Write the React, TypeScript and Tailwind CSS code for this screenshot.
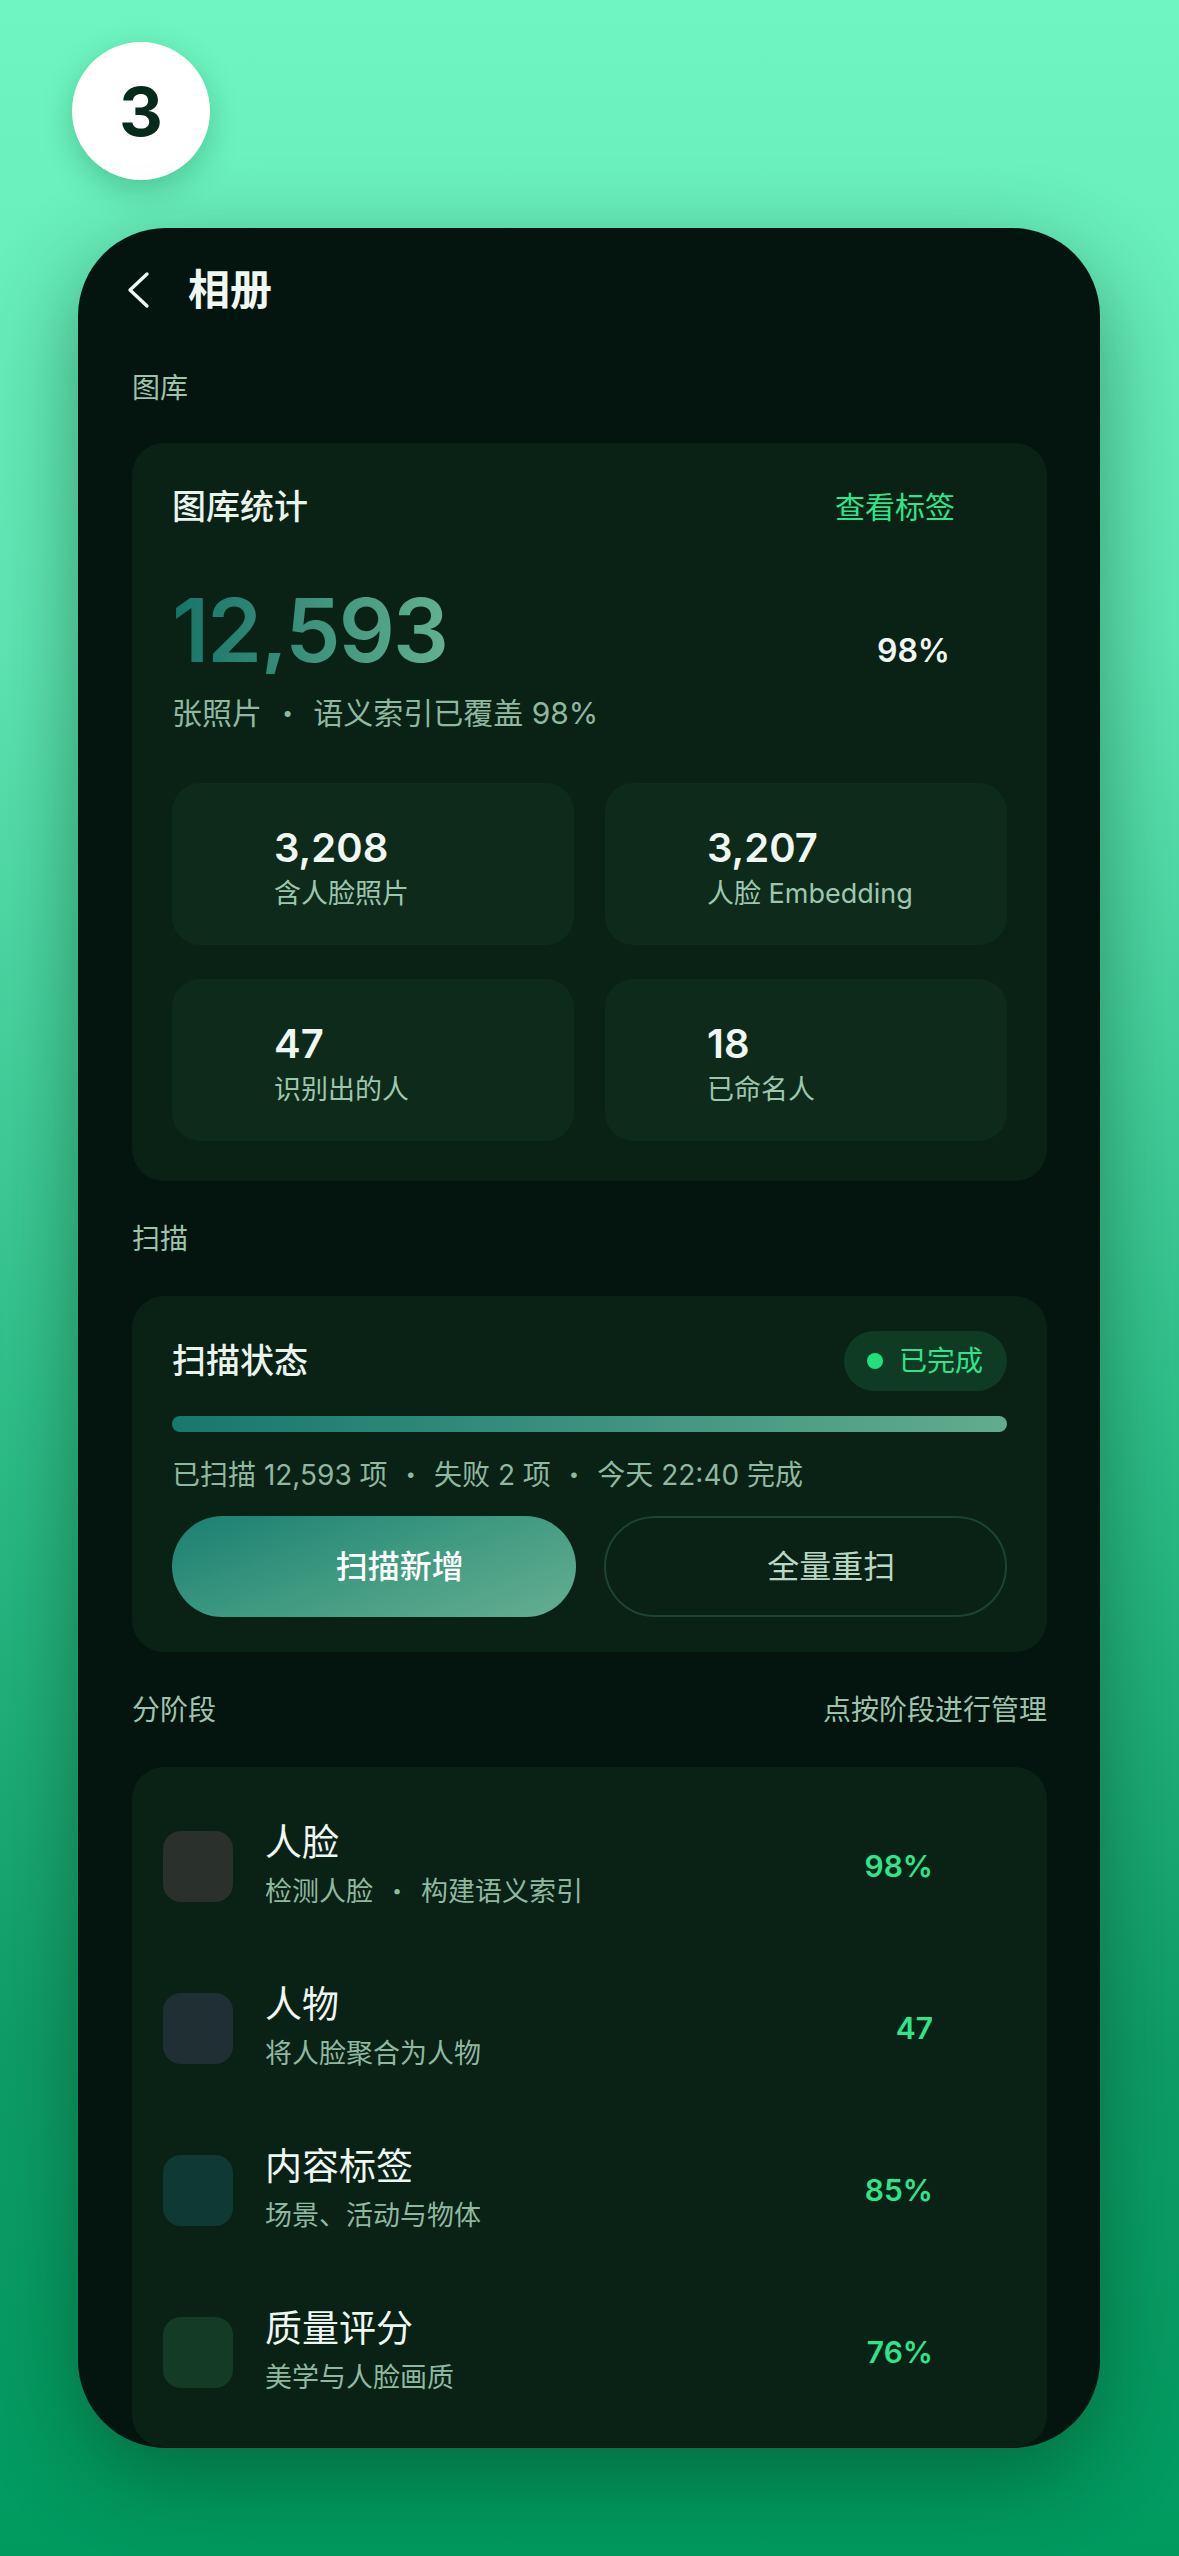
const font = { fontFamily: 'Inter, "Noto Sans CJK SC", sans-serif' };

interface Stat {
  value: string;
  label: string;
}

interface Stage {
  title: string;
  desc: string[];
  value: string;
  swatch: string;
}

const stats: Stat[] = [
  { value: '3,208', label: '含人脸照片' },
  { value: '3,207', label: '人脸 Embedding' },
  { value: '47', label: '识别出的人' },
  { value: '18', label: '已命名人' },
];

const stages: Stage[] = [
  { title: '人脸', desc: ['检测人脸', '构建语义索引'], value: '98%', swatch: 'bg-[#2a302b]' },
  { title: '人物', desc: ['将人脸聚合为人物'], value: '47', swatch: 'bg-[#1f2f33]' },
  { title: '内容标签', desc: ['场景、活动与物体'], value: '85%', swatch: 'bg-[#0f3a33]' },
  { title: '质量评分', desc: ['美学与人脸画质'], value: '76%', swatch: 'bg-[#143b25]' },
];

function Dotted({ parts, gap }: { parts: string[]; gap: string }) {
  return (
    <>
      {parts.map((p, i) => (
        <span key={p}>
          {i > 0 && <span className={`font-black ${gap}`}>·</span>}
          {p}
        </span>
      ))}
    </>
  );
}

function SectionLabel({ children, right }: { children: string; right?: string }) {
  return (
    <div className="flex items-center justify-between text-[28px] leading-[36px] text-[#9cc4ad]">
      <span>{children}</span>
      {right && <span>{right}</span>}
    </div>
  );
}

export default function App() {
  return (
    <div
      className="w-[1179px] h-[2556px] overflow-hidden bg-[linear-gradient(180deg,#6ef5c1_0%,#5fe6b4_25%,#2fbf8a_55%,#0f9e68_80%,#009a5f_100%)]"
      style={font}
    >
      <div className="pt-[42px] pl-[72px]">
        <div className="w-[138px] h-[138px] rounded-full bg-white flex items-center justify-center shadow-[0_10px_30px_rgba(0,80,40,0.25)]">
          <span className="text-[68px] font-bold text-[#082a1a] leading-none">3</span>
        </div>
      </div>

      <div className="mt-[48px] ml-[78px] w-[1022px] h-[2220px] rounded-[88px] bg-[#04140e] overflow-hidden shadow-[0_30px_90px_rgba(0,50,25,0.45)]">
        <div className="pt-[38px] pl-[48px] flex items-center h-[86px]">
          <svg width="24" height="38" viewBox="0 0 24 38" fill="none" className="text-[#eef7f1]">
            <polyline points="21,3 4,19 21,35" stroke="currentColor" strokeWidth="3.4" strokeLinecap="round" strokeLinejoin="round" />
          </svg>
          <span className="ml-[38px] text-[42px] leading-[48px] font-semibold text-[#eef7f1]">相册</span>
        </div>

        <div className="pl-[54px] pr-[53px]">
          <div className="mt-[56px]">
            <SectionLabel>图库</SectionLabel>
          </div>

          <div className="mt-[37px] rounded-[32px] bg-[#0a2116] px-[40px] pt-[42px] pb-[40px]">
            <div className="flex items-center justify-between">
              <span className="text-[34px] leading-[44px] font-medium text-[#e8f4ec]">图库统计</span>
              <span className="mr-[52px] text-[30px] leading-[44px] text-[#2ee58a]">查看标签</span>
            </div>
            <div className="mt-[57px] flex items-baseline justify-between">
              <span className="text-[88px] leading-[88px] font-semibold tracking-[-2px] bg-[linear-gradient(90deg,#167468,#62b090)] bg-clip-text text-transparent">
                12,593
              </span>
              <span className="mr-[57px] text-[32px] font-semibold text-[#eef7f1]">98%</span>
            </div>
            <div className="mt-[18px] text-[30px] leading-[40px] text-[#8fb8a0]">
              <Dotted parts={['张照片', '语义索引已覆盖 98%']} gap="mx-[20px]" />
            </div>

            <div className="mt-[50px] grid grid-cols-2 gap-x-[31px] gap-y-[34px]">
              {stats.map((s) => (
                <div key={s.label} className="h-[162px] rounded-[28px] bg-[#0e2a1b] pl-[102px] pt-[41px]">
                  <div className="text-[40px] leading-[48px] font-semibold text-[#eef7f1]">{s.value}</div>
                  <div className="mt-[5px] text-[27px] leading-[34px] text-[#9cc7ae]">{s.label}</div>
                </div>
              ))}
            </div>
          </div>

          <div className="mt-[40px]">
            <SectionLabel>扫描</SectionLabel>
          </div>

          <div className="mt-[39px] rounded-[32px] bg-[#0a2116] px-[40px] pt-[35px] pb-[35px]">
            <div className="flex items-center justify-between">
              <span className="text-[34px] leading-[44px] font-medium text-[#e8f4ec]">扫描状态</span>
              <span className="h-[60px] w-[163px] rounded-full bg-[#0f3a24] flex items-center pl-[23px] gap-[16px]">
                <span className="w-[16px] h-[16px] rounded-full bg-[#1fe07a]" />
                <span className="text-[28px] leading-[36px] text-[#2ee58a]">已完成</span>
              </span>
            </div>
            <div className="mt-[25px] h-[16px] rounded-full bg-[linear-gradient(90deg,#17786c,#62ab8f)]" />
            <div className="mt-[23px] text-[28px] leading-[40px] text-[#8fb8a0]">
              <Dotted parts={['已扫描 12,593 项', '失败 2 项', '今天 22:40 完成']} gap="mx-[18px]" />
            </div>
            <div className="mt-[21px] grid grid-cols-2 gap-[28px]">
              <button className="h-[101px] rounded-full bg-[linear-gradient(160deg,#1b7f73_0%,#3f9a80_50%,#66ae92_100%)] flex items-center justify-center pl-[52px] text-[32px] font-medium text-white">
                扫描新增
              </button>
              <button className="h-[101px] rounded-full border-2 border-[#1d4430] flex items-center justify-center pl-[52px] text-[32px] text-[#b8d8c4]">
                全量重扫
              </button>
            </div>
          </div>

          <div className="mt-[40px]">
            <SectionLabel right="点按阶段进行管理">分阶段</SectionLabel>
          </div>

          <div className="mt-[39px] h-[680px] rounded-[32px] bg-[#0a2116] pl-[31px] pr-[114px] pt-[18px]">
            {stages.map((st) => (
              <div key={st.title} className="h-[162px] flex items-center">
                <div className={`w-[70px] h-[71px] rounded-[18px] ${st.swatch}`} />
                <div className="ml-[32px] flex-1">
                  <div className="text-[37px] leading-[44px] text-[#eef7f1]">{st.title}</div>
                  <div className="mt-[8px] text-[27px] leading-[38px] text-[#8fb8a0]">
                    <Dotted parts={st.desc} gap="mx-[19px]" />
                  </div>
                </div>
                <span className="text-[30px] font-semibold text-[#2ee58a]">{st.value}</span>
              </div>
            ))}
          </div>
        </div>
      </div>
    </div>
  );
}
